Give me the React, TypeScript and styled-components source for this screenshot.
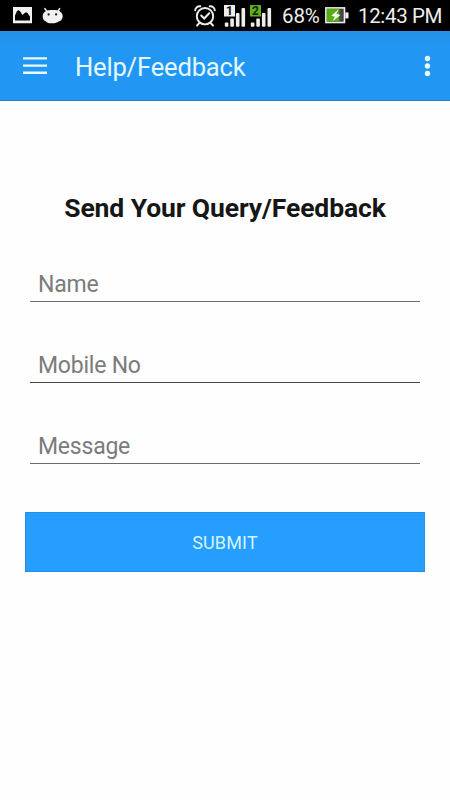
import React from "react";
import styled, { createGlobalStyle } from "styled-components";

const GlobalStyle = createGlobalStyle`
  *, *::before, *::after { box-sizing: border-box; }
  body { margin: 0; background: #fefefe; font-family: Roboto, "Noto Sans", sans-serif; }
`;

const Screen = styled.div`
  display: flex;
  flex-direction: column;
  width: 450px;
  height: 800px;
  overflow: hidden;
  background: #fefefe;
`;

const StatusBar = styled.div`
  display: flex;
  align-items: flex-start;
  flex: none;
  height: 31px;
  padding: 0 0 0 12px;
  background: #000;
`;

const StatusIcon = styled.svg<{ $gap?: number }>`
  display: block;
  flex: none;
  margin-right: ${(p) => p.$gap ?? 0}px;
`;

const Spacer = styled.div`
  flex: 1;
`;

const StatusText = styled.span<{ $width: number; $size: number; $tracking?: number }>`
  flex: none;
  width: ${(p) => p.$width}px;
  line-height: 32px;
  font-size: ${(p) => p.$size}px;
  letter-spacing: ${(p) => p.$tracking ?? 0}px;
  white-space: nowrap;
  color: #eee;
`;

const AppBar = styled.header`
  display: flex;
  align-items: center;
  flex: none;
  height: 70px;
  padding: 0 19px 0 23px;
  background: linear-gradient(#2790e6 0, #2196f3 14px, #2196f3 69px, #1b83cb 69px);
`;

const IconButton = styled.button`
  display: flex;
  flex: none;
  padding: 0;
  border: 0;
  background: none;
  color: #e9fbff;
`;

const Title = styled.h1`
  flex: 1;
  margin: 2px 0 0 28px;
  font-size: 25.6px;
  font-weight: 400;
  line-height: 30px;
  letter-spacing: -0.2px;
  color: #e3f8ff;
`;

const Form = styled.form`
  display: flex;
  flex-direction: column;
  padding: 91px 25px 0;
`;

const Heading = styled.h2`
  margin: 0 0 28px;
  font-size: 26.5px;
  font-weight: 700;
  line-height: 32px;
  letter-spacing: -0.1px;
  text-align: center;
  white-space: nowrap;
  color: #161616;
`;

const Field = styled.input<{ $line: string }>`
  height: 50px;
  margin: 0 5px 31px;
  padding: 15px 8px 0;
  border: 0;
  border-bottom: 1px solid ${(p) => p.$line};
  border-radius: 0;
  outline: 0;
  background: transparent;
  font: 400 23px Roboto, "Noto Sans", sans-serif;
  letter-spacing: -0.22px;
  color: #222;

  &::placeholder {
    color: #7b7b7b;
    opacity: 1;
  }
`;

const Submit = styled.button`
  height: 60px;
  margin-top: 17px;
  padding: 0;
  border: 1px solid #2291e3;
  background: #259eff;
  font: 400 18px Roboto, "Noto Sans", sans-serif;
  letter-spacing: 0.15px;
  color: #d3f4ff;
`;

const Signal = ({ sim, badge, ink, gap }: { sim: string; badge: string; ink: string; gap: number }) => (
  <StatusIcon width="22" height="31" viewBox="0 0 22 31" $gap={gap}>
    <rect x="0" y="5" width="11" height="11.5" fill={badge} />
    <text x="5.5" y="15" textAnchor="middle" fontFamily="Roboto, sans-serif" fontSize="12" fontWeight="700" fill={ink}>
      {sim}
    </text>
    <g fill="#eee">
      <rect x="0.8" y="22.5" width="3.6" height="4.2" rx="1" />
      <rect x="6.3" y="18.5" width="3.6" height="8.2" rx="1" />
      <rect x="11.9" y="13" width="3.6" height="13.7" rx="1" />
      <rect x="17.5" y="8" width="3.6" height="18.7" rx="1" />
    </g>
  </StatusIcon>
);

const PictureIcon = () => (
  <StatusIcon width="20" height="31" viewBox="0 0 20 31" $gap={10}>
    <path
      fill="#f1f1f1"
      fillRule="evenodd"
      d="M1 7h19v16.3H1zM3 20.6h15v-4l-2.5-3.7-1.4-.7-1.4.7-2.2 2-2.6-4-1.4-.6-1.5.7L3 15.5z"
    />
  </StatusIcon>
);

const AndroidIcon = () => (
  <StatusIcon width="22" height="31" viewBox="0 0 22 31">
    <path d="M5 11.5 2.8 8.5M15.7 11.5l2-3" stroke="#eee" strokeWidth="1.4" strokeLinecap="round" />
    <path
      fill="#f1f1f1"
      d="M3.6 11.2C6 9.7 14.2 9.3 17.4 11c2 1 3.4 3.1 3.3 5.3 0 3-1.8 4.8-4.2 5.3-1.3 1.6-4.4 1.9-7.7 1.7-2.5-.1-4.2-.6-4.7-1.8C1.8 21 .6 18.8.7 16.3c0-2.2 1-4.1 2.9-5.1z"
    />
    <circle cx="6.6" cy="14.4" r="1.1" fill="#111" />
    <circle cx="14.1" cy="14.4" r="1.1" fill="#111" />
  </StatusIcon>
);

const AlarmIcon = () => (
  <StatusIcon width="22" height="31" viewBox="0 0 22 31" $gap={8} fill="none" stroke="#eee" strokeLinecap="round">
    <circle cx="11" cy="16.2" r="8.2" strokeWidth="1.9" />
    <path d="M1.2 10.3c.2-2.7 2.3-4.3 5.1-4M20.8 10.3c-.2-2.7-2.3-4.3-5.1-4" strokeWidth="1.9" />
    <path d="m5.2 23.2-2.1 2.3M16.8 23.2l2.1 2.3" strokeWidth="2" />
    <path d="m7.2 15.5 3 3 5-5.2" strokeWidth="2" />
  </StatusIcon>
);

const BatteryIcon = () => (
  <StatusIcon width="24" height="31" viewBox="0 0 24 31" $gap={9}>
    <rect x="0.9" y="7.9" width="18.6" height="14.6" fill="#444" stroke="#eee" strokeWidth="1.6" />
    <rect x="1.8" y="8.8" width="12.5" height="12.8" fill="#55ad12" />
    <rect x="20.3" y="12.4" width="3.2" height="6" fill="#eee" />
    <path fill="#f8f8f8" d="m13.7 9.2-7.4 6.5 3.5 1-2.3 4.5 8-6.3-4.1-1.2z" />
  </StatusIcon>
);

const MenuIcon = () => (
  <svg width="24" height="18" viewBox="0 0 24 18" fill="currentColor">
    <path d="M0 .2h24v2.4H0zM0 7.4h24v2.4H0zM0 14.6h24V17H0z" />
  </svg>
);

const OverflowIcon = () => (
  <svg width="7" height="22" viewBox="0 0 7 22" fill="currentColor">
    <circle cx="3.5" cy="3.5" r="2.7" />
    <circle cx="3.5" cy="11" r="2.7" />
    <circle cx="3.5" cy="18.5" r="2.7" />
  </svg>
);

export default function App() {
  return (
    <>
      <GlobalStyle />
      <Screen>
        <StatusBar>
          <PictureIcon />
          <AndroidIcon />
          <Spacer />
          <AlarmIcon />
          <Signal sim="1" badge="#eee" ink="#111" gap={4} />
          <Signal sim="2" badge="#62ae20" ink="#122704" gap={10} />
          <StatusText $width={43} $size={20.5} $tracking={-0.1}>68%</StatusText>
          <BatteryIcon />
          <StatusText $width={92} $size={20.5} $tracking={-0.35}>12:43 PM</StatusText>
        </StatusBar>
        <AppBar>
          <IconButton type="button" aria-label="Menu">
            <MenuIcon />
          </IconButton>
          <Title>Help/Feedback</Title>
          <IconButton type="button" aria-label="More options">
            <OverflowIcon />
          </IconButton>
        </AppBar>
        <Form onSubmit={(e) => e.preventDefault()}>
          <Heading>Send Your Query/Feedback</Heading>
          <Field $line="#6b6b6b" placeholder="Name" aria-label="Name" />
          <Field $line="#454545" placeholder="Mobile No" aria-label="Mobile No" />
          <Field $line="#6b6b6b" placeholder="Message" aria-label="Message" />
          <Submit type="submit">SUBMIT</Submit>
        </Form>
      </Screen>
    </>
  );
}
